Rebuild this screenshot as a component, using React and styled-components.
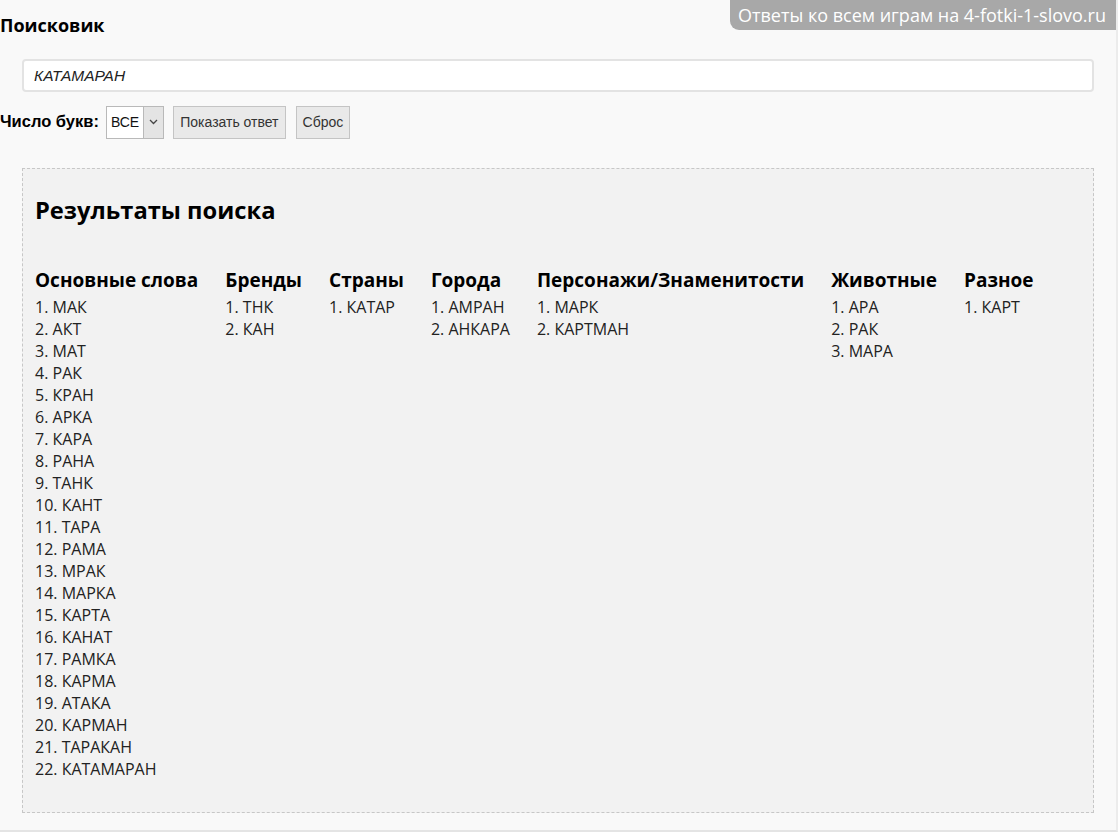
import React, { useState } from 'react';
import styled, { createGlobalStyle } from 'styled-components';

const GlobalStyle = createGlobalStyle`
  html, body {
    margin: 0;
    padding: 0;
    background: #ffffff;
  }
  body {
    font-family: "Open Sans", "Liberation Sans", sans-serif;
    color: #000;
  }
`;

const Page = styled.div`
  position: relative;
  box-sizing: border-box;
  width: 1118px;
  height: 832px;
  background: #f9f9f9;
  border-right: 2px solid #ececec;
  border-bottom: 2px solid #e4e4e4;
`;

const Badge = styled.div`
  position: absolute;
  top: 0;
  right: 0;
  height: 30px;
  padding: 0 10px 0 8px;
  display: flex;
  align-items: center;
  background: #a8a8a8;
  color: #fff;
  font-family: "Open Sans", sans-serif;
  font-size: 18px;
  border-bottom-left-radius: 9px;
`;

const Heading = styled.h3`
  margin: 0;
  padding-top: 13px;
  height: 24px;
  font-size: 18px;
  font-weight: 700;
  line-height: 24px;
`;

const SearchWrap = styled.div`
  padding: 22px 22px 0 22px;
`;

const SearchInput = styled.input`
  width: 100%;
  box-sizing: border-box;
  height: 33px;
  padding: 0 10px;
  border: 2px solid #e3e3e3;
  border-radius: 4px;
  background: #fff;
  font-family: "Liberation Sans", Arial, sans-serif;
  font-style: italic;
  font-size: 15.5px;
  color: #222;
  outline: none;
`;

const Controls = styled.div`
  display: flex;
  align-items: center;
  margin-top: 13px;
  height: 34px;
`;

const Label = styled.label`
  font-family: "Liberation Sans", Arial, sans-serif;
  font-weight: 700;
  font-size: 16.5px;
  margin-right: 7px;
  margin-top: -2px;
`;

const SelectBox = styled.div`
  display: flex;
  height: 33px;
  border: 1px solid #b9b9b9;
  box-sizing: border-box;
  background: #fff;
  margin-right: 9px;
`;

const SelectValue = styled.span`
  display: flex;
  align-items: center;
  padding: 0 4px 0 4px;
  font-family: "Liberation Sans", Arial, sans-serif;
  font-size: 14px;
  color: #111;
`;

const SelectArrow = styled.span`
  width: 19px;
  display: flex;
  align-items: center;
  justify-content: center;
  background: #e4e4e4;
  border-left: 1px solid #b9b9b9;
`;

const Button = styled.button`
  height: 33px;
  box-sizing: border-box;
  padding: 0 6px;
  margin-right: 10px;
  border: 1px solid #c4c4c4;
  background: #e9e9e9;
  font-family: "Liberation Sans", Arial, sans-serif;
  font-size: 14px;
  color: #333;
  cursor: pointer;
`;

const Results = styled.div`
  margin: 29px 22px 0 22px;
  height: 645px;
  box-sizing: border-box;
  border: 1px dashed #c7c7c7;
  background: #f2f2f2;
  padding: 25px 12px 0 12px;
`;

const ResultsTitle = styled.h2`
  margin: 0;
  font-size: 23.7px;
  font-weight: 700;
  line-height: 32px;
`;

const Columns = styled.div`
  display: flex;
  gap: 27px;
  margin-top: 41px;
`;

const Column = styled.div`
  display: flex;
  flex-direction: column;
`;

const ColumnTitle = styled.div`
  font-size: 19px;
  font-weight: 700;
  line-height: 26px;
  white-space: nowrap;
  margin-bottom: 3px;
`;

const Item = styled.div`
  font-size: 16px;
  line-height: 22px;
  color: #222;
  white-space: nowrap;
`;

const data = [
  {
    title: 'Основные слова',
    words: ['МАК', 'АКТ', 'МАТ', 'РАК', 'КРАН', 'АРКА', 'КАРА', 'РАНА', 'ТАНК', 'КАНТ', 'ТАРА', 'РАМА', 'МРАК', 'МАРКА', 'КАРТА', 'КАНАТ', 'РАМКА', 'КАРМА', 'АТАКА', 'КАРМАН', 'ТАРАКАН', 'КАТАМАРАН'],
  },
  { title: 'Бренды', words: ['ТНК', 'КАН'] },
  { title: 'Страны', words: ['КАТАР'] },
  { title: 'Города', words: ['АМРАН', 'АНКАРА'] },
  { title: 'Персонажи/Знаменитости', words: ['МАРК', 'КАРТМАН'] },
  { title: 'Животные', words: ['АРА', 'РАК', 'МАРА'] },
  { title: 'Разное', words: ['КАРТ'] },
];

const App = () => {
  const [query, setQuery] = useState('КАТАМАРАН');

  return (
    <>
      <GlobalStyle />
      <Page>
        <Badge>Ответы ко всем играм на 4-fotki-1-slovo.ru</Badge>
        <Heading>Поисковик</Heading>
        <SearchWrap>
          <SearchInput value={query} onChange={e => setQuery(e.target.value)} />
        </SearchWrap>
        <Controls>
          <Label>Число букв:</Label>
          <SelectBox>
            <SelectValue>ВСЕ</SelectValue>
            <SelectArrow>
              <svg width="9" height="6" viewBox="0 0 9 6">
                <path d="M1 1l3.5 3.5L8 1" stroke="#444" strokeWidth="1.3" fill="none" />
              </svg>
            </SelectArrow>
          </SelectBox>
          <Button type="button">Показать ответ</Button>
          <Button type="button">Сброс</Button>
        </Controls>
        <Results>
          <ResultsTitle>Результаты поиска</ResultsTitle>
          <Columns>
            {data.map(col => (
              <Column key={col.title}>
                <ColumnTitle>{col.title}</ColumnTitle>
                {col.words.map((w, i) => (
                  <Item key={w}>{i + 1}. {w}</Item>
                ))}
              </Column>
            ))}
          </Columns>
        </Results>
      </Page>
    </>
  );
};

export default App;
